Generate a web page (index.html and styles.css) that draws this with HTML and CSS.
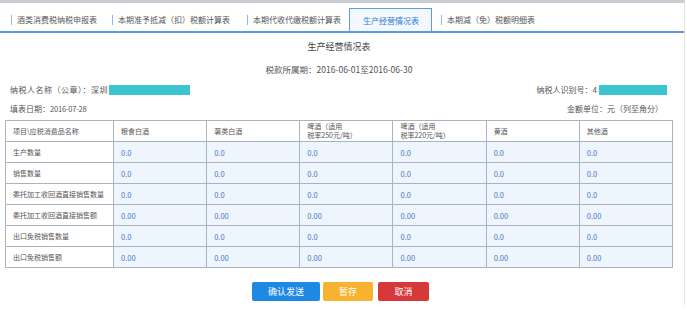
FILE: index.html
```html
<!DOCTYPE html>
<html lang="zh-CN">
<head>
    <meta charset="UTF-8">
    <title>生产经营情况表</title>
    <link rel="stylesheet" href="styles.css">
</head>
<body>

    <div class="page">
        <!-- Tabs -->
        <div class="tabs">
            <div class="tab"><span class="tab-label">酒类消费税纳税申报表</span></div>
            <div class="tab tab-2"><span class="tab-label">本期准予抵减（扣）税额计算表</span></div>
            <div class="tab tab-3"><span class="tab-label">本期代收代缴税额计算表</span></div>
            <div class="tab tab-active">生产经营情况表</div>
            <div class="tab tab-5"><span class="tab-label">本期减（免）税额明细表</span></div>
        </div>

        <div class="sheet">
            <div class="sheet-title">生产经营情况表</div>
            <div class="sheet-period">税款所属期：2016-06-01至2016-06-30</div>

            <div class="info-row info-first">
                <div class="info-item info-name">纳税人名称（公章）：深圳<span class="mask mask-name"></span></div>
                <div class="info-item">纳税人识别号：4<span class="mask mask-id"></span></div>
            </div>
            <div class="info-row info-second">
                <div class="info-item">填表日期：<span class="num">2016-07-28</span></div>
                <div class="info-item info-unit">金额单位：元（列至角分）</div>
            </div>

            <table class="grid">
                <colgroup>
                    <col class="col-label">
                    <col><col><col><col><col><col>
                </colgroup>
                <thead>
                    <tr>
                        <th>项目\应税消费品名称</th>
                        <th>粮食白酒</th>
                        <th>薯类白酒</th>
                        <th>啤酒（适用<br>税率250元/吨）</th>
                        <th>啤酒（适用<br>税率220元/吨）</th>
                        <th>黄酒</th>
                        <th>其他酒</th>
                    </tr>
                </thead>
                <tbody id="rows"></tbody>
            </table>

            <div class="actions">
                <button class="btn btn-send">确认发送</button>
                <button class="btn btn-save">暂存</button>
                <button class="btn btn-cancel">取消</button>
            </div>
        </div>
    </div>

    <script>
        // Row labels and the value format for each row
        const rows = [
            ['生产数量', '0.0'],
            ['销售数量', '0.0'],
            ['委托加工收回酒直接销售数量', '0.0'],
            ['委托加工收回酒直接销售额', '0.00'],
            ['出口免税销售数量', '0.0'],
            ['出口免税销售额', '0.00']
        ];

        const body = document.getElementById('rows');
        rows.forEach(row => {
            const tr = document.createElement('tr');
            const label = document.createElement('td');
            label.className = 'row-label';
            label.innerText = row[0];
            tr.appendChild(label);
            for (let i = 0; i < 6; i++) {
                const td = document.createElement('td');
                td.className = 'value';
                td.innerText = row[1];
                tr.appendChild(td);
            }
            body.appendChild(tr);
        });
    </script>

</body>
</html>
```

FILE: styles.css
```css
body {
    margin: 0;
    font-family: "Noto Sans CJK SC", "Noto Sans", sans-serif;
    color: #555;
    background-color: #fff;
}

.page {
    width: 684px;
    height: 302px;
    border-top: 3px solid #c9cdd3;
    border-right: 1px solid #e4e4e4;
}

/* Tabs */
.tabs {
    display: flex;
    align-items: flex-end;
    height: 28px;
    padding-left: 11px;
    border-bottom: 2px solid #5b9be0;
    font-size: 8px;
}

.tab {
    display: flex;
    align-items: center;
    height: 22px;
    color: #555;
}

.tab-label {
    border-left: 1px solid #8fb8e6;
    padding-left: 5px;
    line-height: 10px;
}

.tab-2 {
    margin-left: 15px;
}

.tab-3 {
    margin-left: 17px;
}

.tab-active {
    margin-left: 8px;
    padding: 0 12px 0 13px;
    border: 1px solid #5b9be0;
    border-bottom: none;
    background-color: #f3f8fe;
    color: #2e7bd6;
}

.tab-5 {
    margin-left: 9px;
}

/* Sheet */
.sheet {
    padding: 0 11px 0 5px;
}

.sheet-title {
    margin-top: 7px;
    text-align: center;
    font-size: 9px;
    line-height: 14px;
    color: #444;
}

.sheet-period {
    margin-top: 8px;
    text-align: center;
    font-size: 8.5px;
    line-height: 14px;
}

.info-row {
    display: flex;
    justify-content: space-between;
    padding: 0 6px 0 5px;
    font-size: 8px;
    line-height: 14px;
}

.info-first {
    margin-top: 7px;
}

.info-second {
    margin-top: 5px;
}

.info-item {
    display: flex;
    align-items: center;
}

.info-name {
    letter-spacing: 0.5px;
}

.info-unit {
    padding-right: 4px;
}

.num {
    font-size: 7.5px;
    letter-spacing: -0.2px;
}

.mask {
    display: inline-block;
    height: 10px;
    background-color: #3cc4d0;
}

.mask-name {
    width: 81px;
    margin-left: 1px;
}

.mask-id {
    width: 68px;
    margin-left: 2px;
}

/* Table */
.grid {
    margin-top: 4px;
    width: 668px;
    table-layout: fixed;
    border-collapse: collapse;
    font-size: 7px;
}

.col-label {
    width: 108px;
}

.grid th,
.grid td {
    height: 20px;
    padding: 0 0 0 7px;
    border: 1px solid #aab3c0;
    text-align: left;
    vertical-align: middle;
    font-weight: normal;
}

.grid th {
    line-height: 9px;
    color: #555;
}

.row-label {
    color: #555;
}

.value {
    background-color: #eef5fd;
    color: #4a78c2;
    font-size: 7.5px;
}

/* Buttons */
.actions {
    display: flex;
    justify-content: center;
    margin-top: 14px;
    padding-left: 3px;
}

.btn {
    height: 19px;
    border: none;
    border-radius: 2px;
    color: #fff;
    font-family: inherit;
    font-size: 9px;
    cursor: pointer;
}

.btn-send {
    width: 68px;
    background-color: #1e88e5;
}

.btn-save {
    width: 50px;
    margin-left: 3px;
    background-color: #f7b32f;
}

.btn-cancel {
    width: 51px;
    margin-left: 5px;
    background-color: #d7393b;
}
```
